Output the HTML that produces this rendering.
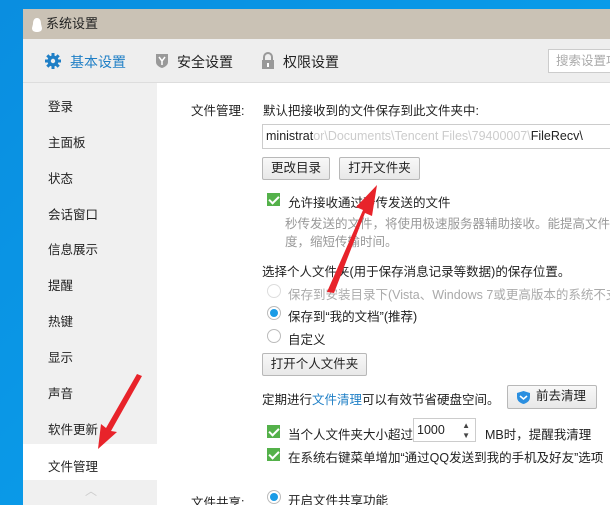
<!DOCTYPE html>
<html><head><meta charset="utf-8"><style>
*{margin:0;padding:0;box-sizing:border-box}
html,body{width:610px;height:505px;overflow:hidden}
body{background:linear-gradient(135deg,#0a8ee0,#0aa6f0);font-family:"Liberation Sans","Noto Sans CJK SC",sans-serif;font-size:12.5px;color:#222;position:relative}
.win{position:absolute;left:23px;top:9px;width:587px;height:496px;background:#fff;overflow:hidden}
.title{position:absolute;left:0;top:0;width:100%;height:30px;background:#cac2b5;font-size:13px;line-height:30px;padding-left:23px}
.tb{position:absolute;left:0;top:30px;width:100%;height:44px;background:#eeeeee;border-bottom:1px solid #ddd}
.side{position:absolute;left:0;top:74px;width:134px;height:422px;background:#f0f0f0}
.a{position:absolute;white-space:nowrap}
.btn{position:absolute;border:1px solid #b8b8b8;border-radius:2px;background:linear-gradient(#f8f8f8,#e8e8e8);text-align:center;line-height:21px;height:23px}
.cb{position:absolute;width:13px;height:13px;background:#54b14a}
.cb:after{content:"";position:absolute;left:4px;top:1px;width:4px;height:8px;border:solid #fff;border-width:0 2px 2px 0;transform:rotate(45deg)}
.rd{position:absolute;width:14px;height:14px;border:1px solid #bbb;border-radius:50%;background:#fff}
.rd.on:after{content:"";position:absolute;left:2px;top:2px;width:8px;height:8px;border-radius:50%;background:#1a9be6}
.g{color:#999}
.cl{overflow:hidden}
</style></head><body>
<div class="win">
<div class="title">系统设置</div>
<svg style="position:absolute;left:8px;top:8px" width="12" height="16"><path d="M6 1C3 1 2 4 2 7L1 11C1 14 3 15 6 15C9 15 11 14 11 11L10 7C10 4 9 1 6 1Z" fill="#fff"/></svg>
<div class="tb">
<svg class="a" style="left:22px;top:14px" width="16" height="16" viewBox="0 0 16 16"><circle cx="8" cy="8" r="5.5" fill="#1f7fc6"/><g stroke="#1f7fc6" stroke-width="3"><path d="M8 0v16M0 8h16M2.3 2.3l11.4 11.4M13.7 2.3L2.3 13.7"/></g><circle cx="8" cy="8" r="2.2" fill="#eee"/></svg>
<div class="a" style="left:47px;top:13px;font-size:14px;color:#1f7fc6">基本设置</div>
<svg class="a" style="left:132px;top:14px" width="14" height="16"><path d="M1 1h12v8c0 3-3 5-6 6c-3-1-6-3-6-6z" fill="#999"/><path d="M4 4l3 4 3-4M7 8v4" stroke="#fff" stroke-width="1.5" fill="none"/></svg>
<div class="a" style="left:154px;top:13px;font-size:14px">安全设置</div>
<svg class="a" style="left:238px;top:13px" width="14" height="18"><path d="M3 8V5a4 4 0 0 1 8 0v3" stroke="#999" stroke-width="2" fill="none"/><rect x="1" y="8" width="12" height="9" fill="#999"/><rect x="6" y="11" width="2" height="4" fill="#fff"/></svg>
<div class="a" style="left:260px;top:13px;font-size:14px">权限设置</div>
<div class="a cl" style="left:525px;top:10px;width:62px;height:24px;border:1px solid #ccc;border-right:none;background:#fff;color:#aaa;line-height:22px;padding-left:7px">搜索设置项</div>
</div>
<div class="side">
<div class="a" style="left:25px;top:13px">登录</div>
<div class="a" style="left:25px;top:49px">主面板</div>
<div class="a" style="left:25px;top:85px">状态</div>
<div class="a" style="left:25px;top:121px">会话窗口</div>
<div class="a" style="left:25px;top:156px">信息展示</div>
<div class="a" style="left:25px;top:192px">提醒</div>
<div class="a" style="left:25px;top:228px">热键</div>
<div class="a" style="left:25px;top:264px">显示</div>
<div class="a" style="left:25px;top:300px">声音</div>
<div class="a" style="left:25px;top:336px">软件更新</div>
<div class="a" style="left:0;top:361px;width:134px;height:36px;background:#fff"></div>
<div class="a" style="left:25px;top:373px">文件管理</div>
<div class="a" style="left:62px;top:399px;color:#ccc;font-size:12px">︿</div>
</div>
<div class="a" style="left:168px;top:91px">文件管理:</div>
<div class="a" style="left:240px;top:91px">默认把接收到的文件保存到此文件夹中:</div>
<div class="a cl" style="left:239px;top:115px;width:348px;height:25px;border:1px solid #ccc;border-right:none;line-height:23px;padding-left:3px">ministrat<span style="color:#ccc">or\Documents\Tencent Files\79400007\</span>FileRecv\</div>
<div class="btn" style="left:239px;top:148px;width:68px">更改目录</div>
<div class="btn" style="left:316px;top:148px;width:81px">打开文件夹</div>
<div class="cb" style="left:244px;top:184px"></div>
<div class="a" style="left:265px;top:183px">允许接收通过秒传发送的文件</div>
<div class="a g" style="left:262px;top:204px">秒传发送的文件，将使用极速服务器辅助接收。能提高文件传输速</div>
<div class="a g" style="left:262px;top:222px">度，缩短传输时间。</div>
<div class="a" style="left:239px;top:252px">选择个人文件夹(用于保存消息记录等数据)的保存位置。</div>
<div class="rd" style="left:244px;top:275px;border-color:#ddd"></div>
<div class="a" style="left:265px;top:275px;color:#aaa">保存到安装目录下(Vista、Windows 7或更高版本的系统不支持)</div>
<div class="rd on" style="left:244px;top:297px"></div>
<div class="a" style="left:265px;top:297px">保存到“我的文档”(推荐)</div>
<div class="rd" style="left:244px;top:320px"></div>
<div class="a" style="left:265px;top:320px">自定义</div>
<div class="btn" style="left:239px;top:344px;width:105px">打开个人文件夹</div>
<div class="a" style="left:239px;top:380px">定期进行<span style="color:#1f7fc6">文件清理</span>可以有效节省硬盘空间。</div>
<div class="btn" style="left:484px;top:376px;width:90px;height:24px">
<svg style="position:absolute;left:8px;top:4px" width="15" height="15"><path d="M1 3l6.5-2 6.5 2v4c0 4-3 6-6.5 7C4 13 1 11 1 7z" fill="#2b8fe0"/><path d="M4 6l3.5 3 3.5-3" stroke="#fff" stroke-width="1.6" fill="none"/></svg>
<span style="position:absolute;left:28px;top:0">前去清理</span></div>
<div class="cb" style="left:244px;top:416px"></div>
<div class="a" style="left:265px;top:415px">当个人文件夹大小超过</div>
<div class="a" style="left:390px;top:409px;width:63px;height:24px;border:1px solid #ccc;line-height:22px;padding-left:3px">1000<span style="position:absolute;right:5px;top:2px;font-size:8px;line-height:10px;color:#444">▲<br>▼</span></div>
<div class="a" style="left:462px;top:415px">MB时，提醒我清理</div>
<div class="cb" style="left:244px;top:439px"></div>
<div class="a" style="left:265px;top:438px">在系统右键菜单增加“通过QQ发送到我的手机及好友”选项</div>
<div class="a" style="left:168px;top:483px">文件共享:</div>
<div class="rd on" style="left:244px;top:481px"></div>
<div class="a" style="left:265px;top:481px">开启文件共享功能</div>
</div>
<svg class="a" style="left:0;top:0" width="610" height="505">
<path d="M327 292L334 293L365 213L372 216L377 185L356 207L363 210Z" fill="#e8232a"/>
<path d="M142 376L137 374L106 428L101 424L98 449L117 432L111 431Z" fill="#e8232a"/>
</svg>
</body></html>
